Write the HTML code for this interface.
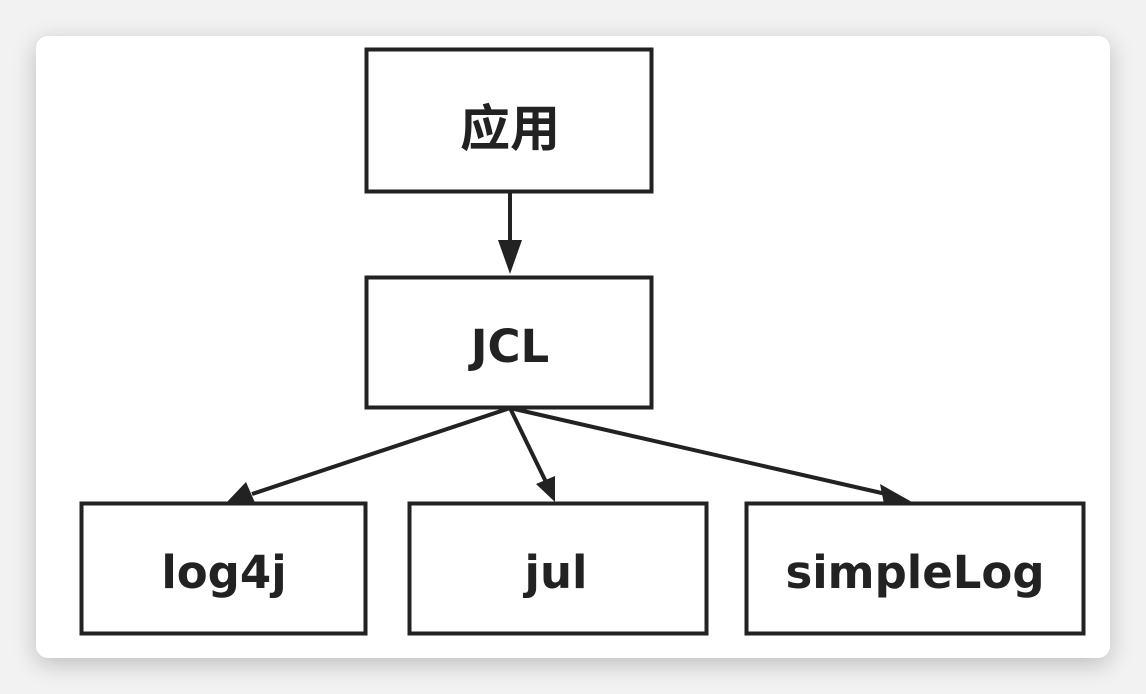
<!DOCTYPE html>
<html><head><meta charset="utf-8"><style>
html,body{margin:0;padding:0;width:1146px;height:694px;background:#f2f2f2;overflow:hidden}
.card{position:absolute;left:36px;top:36px;width:1074px;height:622px;background:#fff;border-radius:12px;box-shadow:0 6px 24px rgba(0,0,0,0.22)}
svg{position:absolute;left:0;top:0}
text{font-family:"DejaVu Sans","Noto Sans CJK SC",sans-serif;font-weight:bold;font-size:45px;fill:#222}
</style></head><body>
<div class="card"></div>
<svg width="1146" height="694" viewBox="0 0 1146 694">
<g fill="none" stroke="#222" stroke-width="4">
<rect x="366.5" y="49.5" width="285" height="142"/>
<rect x="366.5" y="277.5" width="285" height="130"/>
<rect x="81.5" y="503.5" width="284" height="130"/>
<rect x="409.5" y="503.5" width="297" height="130"/>
<rect x="746.5" y="503.5" width="337" height="130"/>
<line x1="510" y1="192" x2="510" y2="250"/>
<line x1="510" y1="408" x2="252" y2="494"/>
<line x1="510" y1="408" x2="546" y2="482"/>
<line x1="510" y1="408" x2="886" y2="494"/>
</g>
<g fill="#222">
<polygon points="498,240 522,240 510,274"/>
<polygon points="226,503 246,482 256,505"/>
<polygon points="536,484 555,476 555,502"/>
<polygon points="880,484 884,504 912,502"/>
</g>
<text x="510" y="146" text-anchor="middle" font-family="Noto Sans CJK SC" style="font-size:50px">应用</text>
<text x="510" y="362" text-anchor="middle">JCL</text>
<text x="224" y="588" text-anchor="middle">log4j</text>
<text x="556" y="588" text-anchor="middle">jul</text>
<text x="915" y="588" text-anchor="middle">simpleLog</text>
</svg>
</body></html>
